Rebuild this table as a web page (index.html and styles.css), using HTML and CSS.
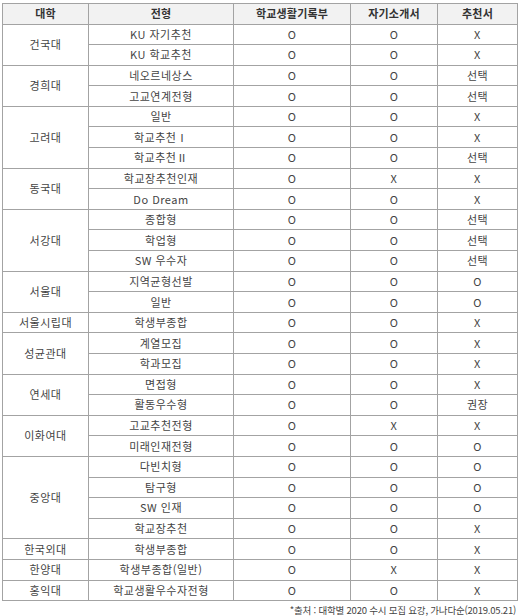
FILE: index.html
```html
<!DOCTYPE html>
<html lang="ko">
<head>
<meta charset="utf-8">
<link rel="stylesheet" href="styles.css">
</head>
<body>
<table class="grid">
<colgroup><col class="c1"><col class="c2"><col class="c3"><col class="c4"><col class="c5"></colgroup>
<thead>
<tr><th>대학</th><th>전형</th><th>학교생활기록부</th><th>자기소개서</th><th>추천서</th></tr>
</thead>
<tbody>
<tr><td rowspan="2">건국대</td><td>KU 자기추천</td><td>O</td><td>O</td><td>X</td></tr>
<tr><td>KU 학교추천</td><td>O</td><td>O</td><td>X</td></tr>
<tr><td rowspan="2">경희대</td><td>네오르네상스</td><td>O</td><td>O</td><td>선택</td></tr>
<tr><td>고교연계전형</td><td>O</td><td>O</td><td>선택</td></tr>
<tr><td rowspan="3">고려대</td><td>일반</td><td>O</td><td>O</td><td>X</td></tr>
<tr><td>학교추천Ⅰ</td><td>O</td><td>O</td><td>X</td></tr>
<tr><td>학교추천Ⅱ</td><td>O</td><td>O</td><td>선택</td></tr>
<tr><td rowspan="2">동국대</td><td>학교장추천인재</td><td>O</td><td>X</td><td>X</td></tr>
<tr><td>Do Dream</td><td>O</td><td>O</td><td>X</td></tr>
<tr><td rowspan="3">서강대</td><td>종합형</td><td>O</td><td>O</td><td>선택</td></tr>
<tr><td>학업형</td><td>O</td><td>O</td><td>선택</td></tr>
<tr><td>SW 우수자</td><td>O</td><td>O</td><td>선택</td></tr>
<tr><td rowspan="2">서울대</td><td>지역균형선발</td><td>O</td><td>O</td><td>O</td></tr>
<tr><td>일반</td><td>O</td><td>O</td><td>O</td></tr>
<tr><td>서울시립대</td><td>학생부종합</td><td>O</td><td>O</td><td>X</td></tr>
<tr><td rowspan="2">성균관대</td><td>계열모집</td><td>O</td><td>O</td><td>X</td></tr>
<tr><td>학과모집</td><td>O</td><td>O</td><td>X</td></tr>
<tr><td rowspan="2">연세대</td><td>면접형</td><td>O</td><td>O</td><td>X</td></tr>
<tr><td>활동우수형</td><td>O</td><td>O</td><td>권장</td></tr>
<tr><td rowspan="2">이화여대</td><td>고교추천전형</td><td>O</td><td>X</td><td>X</td></tr>
<tr><td>미래인재전형</td><td>O</td><td>O</td><td>O</td></tr>
<tr><td rowspan="4">중앙대</td><td>다빈치형</td><td>O</td><td>O</td><td>O</td></tr>
<tr><td>탐구형</td><td>O</td><td>O</td><td>O</td></tr>
<tr><td>SW 인재</td><td>O</td><td>O</td><td>O</td></tr>
<tr><td>학교장추천</td><td>O</td><td>O</td><td>X</td></tr>
<tr><td>한국외대</td><td>학생부종합</td><td>O</td><td>O</td><td>X</td></tr>
<tr><td>한양대</td><td>학생부종합(일반)</td><td>O</td><td>X</td><td>X</td></tr>
<tr><td>홍익대</td><td>학교생활우수자전형</td><td>O</td><td>O</td><td>X</td></tr>
</tbody>
</table>
<p class="source">*출처 : 대학별 2020 수시 모집 요강, 가나다순(2019.05.21)</p>
</body>
</html>
```
FILE: styles.css
```css
html, body {
  margin: 0;
  padding: 0;
  background: #ffffff;
}
body {
  font-family: "Noto Sans CJK KR", "Noto Sans", sans-serif;
  color: #444444;
  padding: 3px 4px 0 2px;
}
.grid {
  border-collapse: collapse;
  width: 515px;
  table-layout: fixed;
  font-size: 11px;
}
.c1 { width: 86px; }
.c2 { width: 145px; }
.c3 { width: 117px; }
.c4 { width: 87px; }
.c5 { width: 80px; }
.grid th, .grid td {
  border: 1px solid #a3a3a3;
  text-align: center;
  padding: 0;
  line-height: 1;
  white-space: nowrap;
}
.grid th {
  background: #f2f2f2;
  height: 19.5px;
  font-weight: bold;
  color: #333333;
  letter-spacing: 0.2px;
}
.grid td {
  height: 19.6px;
  letter-spacing: 0.5px;
}
.source {
  margin: 0;
  padding-top: 2px;
  text-align: right;
  font-size: 9.5px;
  color: #444444;
  letter-spacing: -0.2px;
}
```
